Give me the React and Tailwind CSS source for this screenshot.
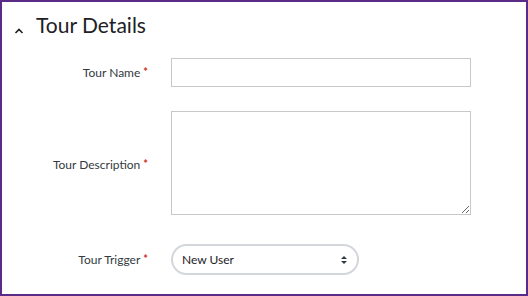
export default function App() {
  const font = { fontFamily: "Lato, 'Liberation Sans', sans-serif" };
  return (
    <div className="w-[528px] h-[296px] bg-white border-2 border-[#5b2a86] overflow-hidden" style={font}>
      <div className="flex items-center h-[46px] pt-[3px]">
        <svg className="ml-[11px] mt-[9px]" width="12" height="8" viewBox="0 0 12 8">
          <polyline points="2.5,6 6,2.5 9.5,6" fill="none" stroke="#1d2125" strokeWidth="1.6" />
        </svg>
        <h2 className="ml-[11px] -mt-[5px] text-[21px] leading-none text-[#1d2125] font-normal">Tour Details</h2>
      </div>
      <div className="flex items-center mt-[10px]">
        <label className="w-[146px] text-right text-[12px] text-[#343a40]">
          Tour Name<span className="text-[#ca3120] ml-[3px] text-[11px] font-bold align-top">*</span>
        </label>
        <input className="ml-[23px] w-[300px] h-[29px] border border-[#c8c8c8] outline-none" />
      </div>
      <div className="flex items-center mt-[24px]">
        <label className="w-[146px] text-right text-[12px] text-[#343a40] pt-[3px]">
          Tour Description<span className="text-[#ca3120] ml-[3px] text-[11px] font-bold align-top">*</span>
        </label>
        <textarea className="ml-[23px] w-[300px] h-[104px] border border-[#c8c8c8] outline-none" />
      </div>
      <div className="flex items-center mt-[29px]">
        <label className="w-[146px] text-right text-[12px] text-[#343a40]">
          Tour Trigger<span className="text-[#ca3120] ml-[3px] text-[11px] font-bold align-top">*</span>
        </label>
        <div className="ml-[23px] w-[188px] h-[31px] rounded-full border-2 border-[#d3d6da] flex items-center justify-between pl-[9px] pr-[10px]">
          <span className="text-[12px] text-[#1d2125]">New User</span>
          <svg width="6" height="10" viewBox="0 0 6 10">
            <polygon points="0,4 3,1 6,4" fill="#343a40" />
            <polygon points="0,6 3,9 6,6" fill="#343a40" />
          </svg>
        </div>
      </div>
    </div>
  );
}
